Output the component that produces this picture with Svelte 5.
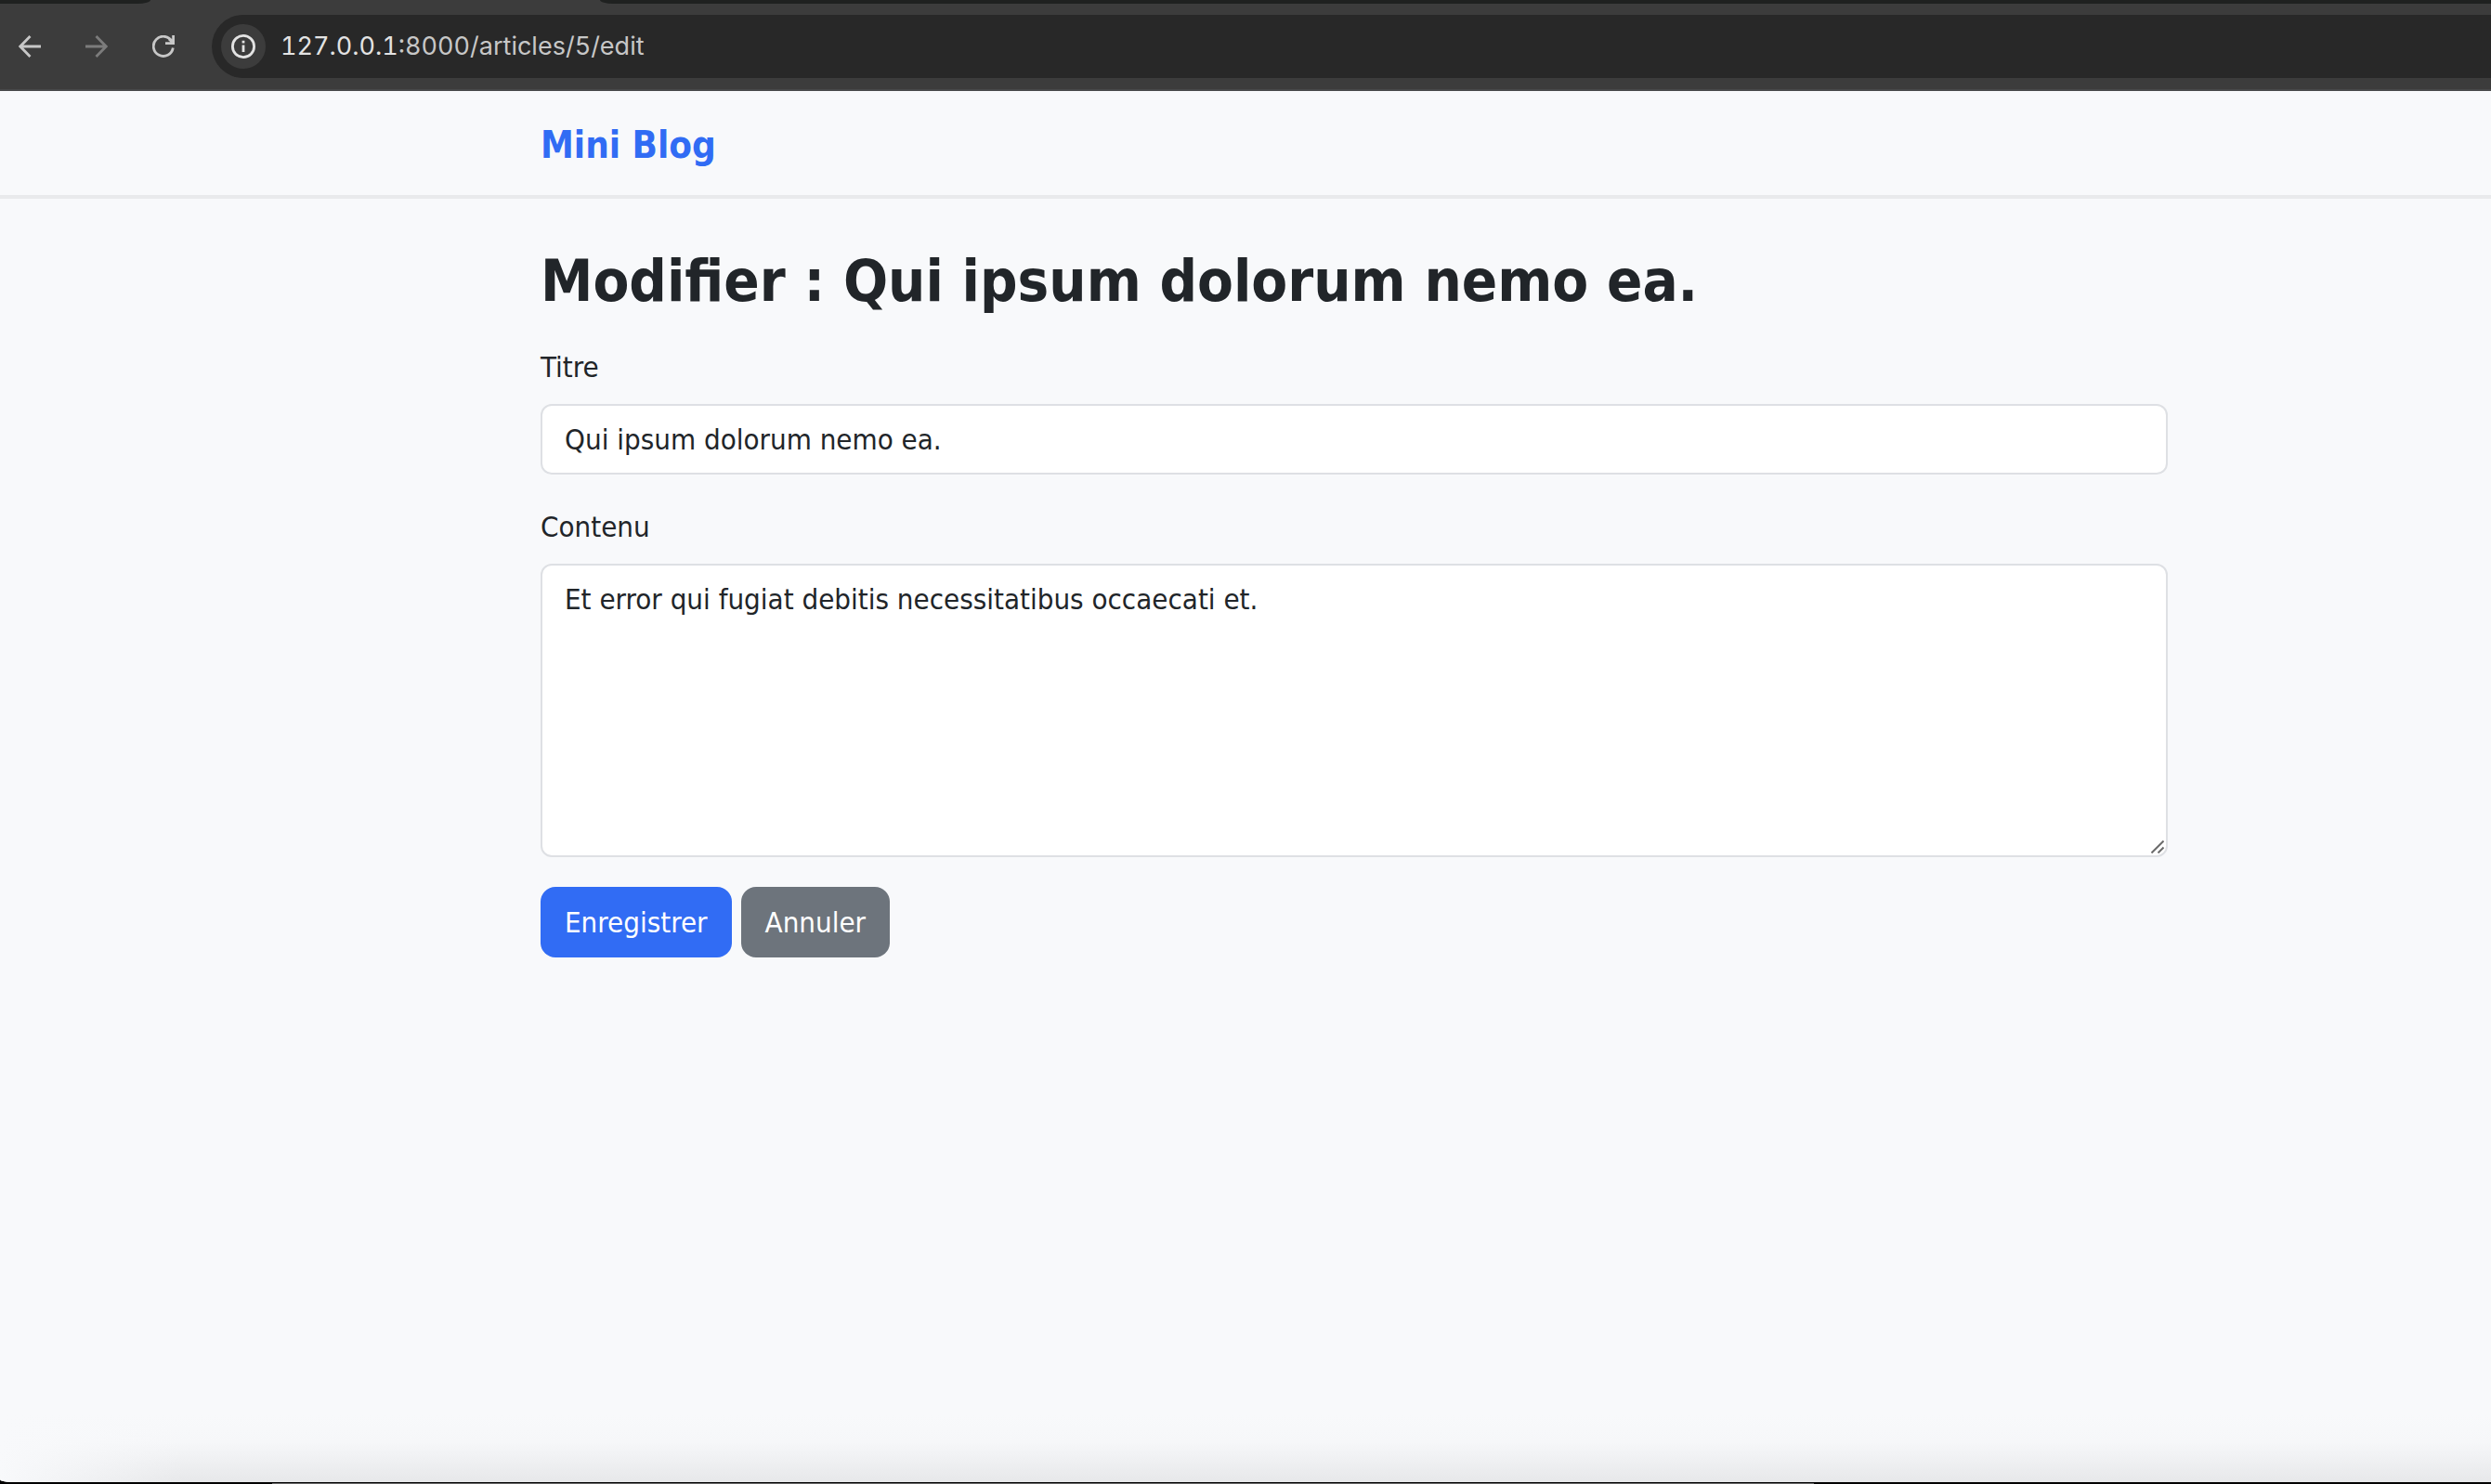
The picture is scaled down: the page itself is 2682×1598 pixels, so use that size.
<script>
  let title = $state('Qui ipsum dolorum nemo ea.');
  let content = $state('Et error qui fugiat debitis necessitatibus occaecati et.');
</script>

<div class="window">
  <div class="tabs"><span class="tab-before"></span><span class="tab-active"></span><span class="tab-after"></span></div>
  <header class="toolbar">
    <div class="tools">
      <button class="tool" type="button" aria-label="Back">
        <svg viewBox="0 0 24 24"><path d="M24 12H2M12.500 1L1.800 12L12.500 23" /></svg>
      </button>
      <button class="tool dim" type="button" aria-label="Forward">
        <svg viewBox="0 0 24 24"><path d="M0 12H22M11.500 1L22.200 12L11.500 23" /></svg>
      </button>
      <button class="tool" type="button" aria-label="Reload">
        <svg viewBox="0 0 24 24"><path d="M21 6.500A10.600 10.600 0 1 0 22.300 13.500M22.600 0V8.600H14M22.600 8.600L18 4" /></svg>
      </button>
    </div>
    <div class="address">
      <button class="info" type="button" aria-label="Site information">
        <svg viewBox="0 0 26 26"><circle cx="13" cy="13" r="11.600" /><path d="M13 11.500V19M13 6.800V9.400" /></svg>
      </button>
      <div class="url"><span class="host">127.0.0.1</span>:8000/articles/5/edit</div>
    </div>
  </header>

  <div class="page">
    <nav class="navbar">
      <a class="brand" href="/articles">Mini Blog</a>
    </nav>
    <main class="content">
      <form class="form">
        <h1>Modifier : Qui ipsum dolorum nemo ea.</h1>
        <div class="field">
          <label for="title">Titre</label>
          <input id="title" type="text" bind:value={title} />
        </div>
        <div class="field">
          <label for="body">Contenu</label>
          <div class="area">
            <textarea id="body" bind:value={content}></textarea>
            <svg class="grip" viewBox="0 0 14 14"><path d="M.5 13.500L13.500 .5M7.500 13.500L13.500 7.500" /></svg>
          </div>
        </div>
        <div class="actions">
          <button class="btn primary" type="button">Enregistrer</button>
          <a class="btn secondary" href="/articles/5">Annuler</a>
        </div>
      </form>
    </main>
    <div class="shade"></div>
  </div>
  <div class="edge"><span></span></div>
</div>

<style>
  :global(body) {
    background: #000;
  }
  .window {
    display: flex;
    flex-direction: column;
    min-height: 100vh;
    font-family: 'DejaVu Sans Condensed', 'DejaVu Sans', sans-serif;
    font-size: 31px;
    line-height: 48px;
    color: #212529;
  }
  .tabs {
    display: flex;
    height: 4px;
    background: #3c3c3c;
  }
  .tab-before,
  .tab-after {
    background: #1f2120;
  }
  .tab-before {
    width: 162px;
    border-bottom-right-radius: 14px 4px;
  }
  .tab-active {
    width: 484px;
  }
  .tab-after {
    flex: 1;
    border-bottom-left-radius: 14px 4px;
  }
  .toolbar {
    display: flex;
    align-items: center;
    padding: 12px 0 12px 20px;
    border-bottom: 2px solid #47484a;
    background: #3c3c3c;
  }
  .tools {
    display: flex;
    gap: 48px;
    width: 208px;
  }
  .tool {
    display: flex;
    padding: 0;
    border: 0;
    background: none;
    color: #c7c7c7;
  }
  .tool svg {
    width: 24px;
    height: 24px;
  }
  .dim {
    color: #7c7c7c;
  }
  svg {
    display: block;
    fill: none;
    stroke: currentColor;
    stroke-width: 2.800;
  }
  .address {
    display: flex;
    flex: 1;
    align-items: center;
    gap: 16px;
    height: 68px;
    padding-left: 10px;
    border-radius: 34px 0 0 34px;
    background: #282828;
    color: #c7c7c7;
    font-family: Inter, sans-serif;
    font-size: 27px;
    font-variant-numeric: tabular-nums;
  }
  .info {
    display: flex;
    align-items: center;
    justify-content: center;
    width: 48px;
    height: 48px;
    padding: 0;
    border: 0;
    border-radius: 50%;
    background: #3c3c3c;
    color: #e3e3e3;
  }
  .info svg {
    width: 26px;
    height: 26px;
  }
  .host {
    color: #e3e3e3;
  }
  .page {
    display: flex;
    flex: 1;
    flex-direction: column;
    border-bottom-left-radius: 12px 3px;
    background: #f8f9fb;
  }
  .navbar,
  .content {
    display: grid;
    grid-template-columns: 97fr minmax(0, 1752px) 58fr;
  }
  .navbar {
    padding: 28px 0 24px;
    border-bottom: 4px solid #e9eaec;
  }
  .brand {
    grid-column: 2;
    justify-self: start;
    color: #316cf4;
    font-size: 40px;
    font-weight: 700;
    line-height: 60px;
    text-decoration: none;
  }
  .content {
    flex: 1;
    padding-top: 50px;
  }
  .form {
    grid-column: 2;
  }
  h1 {
    margin: 0 0 30px;
    font-size: 63px;
    font-weight: 700;
    line-height: 77px;
  }
  .field {
    margin-bottom: 32px;
  }
  label {
    display: block;
    margin-bottom: 16px;
  }
  input,
  textarea {
    display: block;
    box-sizing: border-box;
    width: 100%;
    margin: 0;
    padding: 12px 24px;
    border: 2px solid #dee0e4;
    border-radius: 12px;
    background: #fff;
    color: inherit;
    font: inherit;
    outline: 0;
  }
  input {
    height: 76px;
  }
  .area {
    position: relative;
  }
  textarea {
    height: 316px;
    resize: none;
  }
  .grip {
    position: absolute;
    right: 4px;
    bottom: 4px;
    width: 14px;
    height: 14px;
    color: #6b6b6b;
    stroke-width: 2;
  }
  .actions {
    display: flex;
    gap: 10px;
  }
  .btn {
    box-sizing: border-box;
    height: 76px;
    padding: 14px 26px;
    border: 0;
    border-radius: 16px;
    color: #fff;
    font: inherit;
    text-decoration: none;
  }
  .primary {
    background: #316cf4;
  }
  .secondary {
    background: #6d747c;
  }
  .shade {
    height: 72px;
    border-bottom-left-radius: 12px 3px;
    background: linear-gradient(to right, #f8f9fb, #f8f9fb00 200px),
      linear-gradient(#f8f9fb, #f6f7f9 40%, #e7e8ea);
  }
  .edge {
    display: grid;
    grid-template-columns: 293fr 1660fr 729fr;
    height: 1px;
    padding-top: 1px;
  }
  .edge span {
    grid-column: 2;
    background: #6a6a6a;
  }
</style>
